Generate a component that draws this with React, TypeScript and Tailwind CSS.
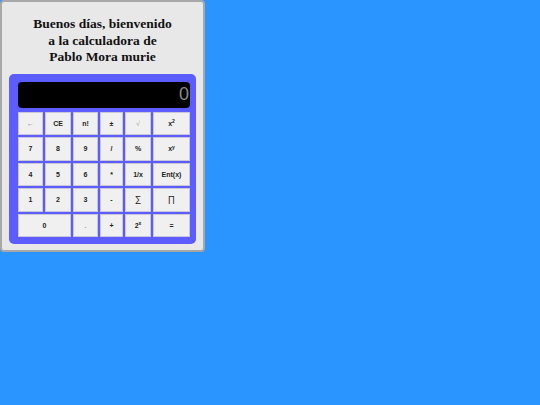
import React from "react";

type B = { t: React.ReactNode; span?: number; c?: string };

const rows: B[] = [
  { t: "←", c: "text-[#777] font-normal" },
  { t: "CE" },
  { t: "n!" },
  { t: "±" },
  { t: "√", c: "text-[#aaa] font-normal" },
  { t: <span>x<sup className="text-[5px]">2</sup></span> },
  { t: "7" },
  { t: "8" },
  { t: "9" },
  { t: "/" },
  { t: "%" },
  { t: <span>x<sup className="text-[5px]">y</sup></span> },
  { t: "4" },
  { t: "5" },
  { t: "6" },
  { t: "*" },
  { t: "1/x" },
  { t: "Ent(x)" },
  { t: "1" },
  { t: "2" },
  { t: "3" },
  { t: "-" },
  { t: "∑", c: "font-normal text-[9px]" },
  { t: "∏", c: "font-normal text-[9px]" },
  { t: "0", span: 2 },
  { t: ".", c: "text-[#999]" },
  { t: "+" },
  { t: <span>2<sup className="text-[5px]">x</sup></span> },
  { t: "=" },
];

export default function App() {
  return (
    <div className="w-[540px] h-[405px] bg-[#2b95ff] overflow-hidden">
      <div className="w-[205px] h-[252px] bg-[#e8e8e8] border-2 border-[#a8a8a8] rounded-[4px] flex flex-col items-center">
        <h1
          className="mt-[14px] text-center font-bold text-[13.5px] leading-[16.5px] text-[#111]"
          style={{ fontFamily: '"Liberation Serif", serif' }}
        >
          Buenos días, bienvenido
          <br />
          a la calculadora de
          <br />
          Pablo Mora murie
        </h1>
        <div className="mt-[8px] w-[187px] bg-[#5c5cff] rounded-[5px] pt-[8px] pb-[7px] pl-[9px] pr-[6px] flex flex-col items-start">
          <div
            className="w-[172px] h-[26px] bg-black rounded-[4px] flex items-center justify-end pr-[1px] text-[18px] text-[#8a8a8a]"
            style={{ fontFamily: '"Liberation Sans", sans-serif' }}
          >
            0
          </div>
          <div
            className="mt-[4px] grid grid-cols-[25px_26px_25px_23px_26px_37px] auto-rows-[23.5px] gap-[2px]"
            style={{ fontFamily: '"Liberation Sans", sans-serif' }}
          >
            {rows.map((b, i) => (
              <div
                key={i}
                className={`${b.span === 2 ? "col-span-2" : ""} bg-[#f0f0f0] border border-[#c8c8d8] flex items-center justify-center text-[7px] font-bold text-[#222] leading-none ${b.c ?? ""}`}
              >
                {b.t}
              </div>
            ))}
          </div>
        </div>
      </div>
    </div>
  );
}
